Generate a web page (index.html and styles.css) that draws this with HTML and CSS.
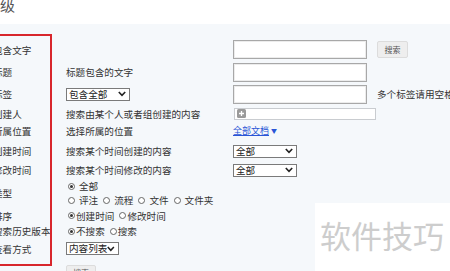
FILE: index.html
```html
<!DOCTYPE html>
<html lang="zh">
<head>
<meta charset="utf-8">
<link rel="stylesheet" href="styles.css">
</head>
<body>
<div class="page">
  <header class="head"><span class="title">级</span></header>
  <div class="form">
    <div class="lbl">包含文字</div>
    <div class="mid"></div>
    <div class="rt"><span class="inp"></span><span class="btn">搜索</span></div>

    <div class="lbl">标题</div>
    <div class="mid">标题包含的文字</div>
    <div class="rt"><span class="inp"></span></div>

    <div class="lbl">标签</div>
    <div class="mid"><span class="sel w64">包含全部<svg class="chev" width="8" height="6" viewBox="0 0 8 6"><polyline points="0.8,1 4,4.4 7.2,1" fill="none" stroke="#222" stroke-width="1.6"/></svg></span></div>
    <div class="rt"><span class="inp"></span><span class="note">多个标签请用空格分隔</span></div>

    <div class="lbl">创建人</div>
    <div class="mid">搜索由某个人或者组创建的内容</div>
    <div class="rt"><span class="pinp"><span class="plus"><svg width="9" height="9" viewBox="0 0 9 9"><rect width="9" height="9" rx="1.5" fill="#9a9a9a"/><path d="M4.5 2v5M2 4.5h5" stroke="#fff" stroke-width="1.3"/></svg></span></span></div>

    <div class="lbl">所属位置</div>
    <div class="mid">选择所属的位置</div>
    <div class="rt"><span class="link"><span class="ul">全部文档</span> <span class="tri">▼</span></span></div>

    <div class="lbl">创建时间</div>
    <div class="mid">搜索某个时间创建的内容</div>
    <div class="rt"><span class="sel w64">全部<svg class="chev" width="8" height="6" viewBox="0 0 8 6"><polyline points="0.8,1 4,4.4 7.2,1" fill="none" stroke="#222" stroke-width="1.6"/></svg></span></div>

    <div class="lbl">修改时间</div>
    <div class="mid">搜索某个时间修改的内容</div>
    <div class="rt"><span class="sel w64">全部<svg class="chev" width="8" height="6" viewBox="0 0 8 6"><polyline points="0.8,1 4,4.4 7.2,1" fill="none" stroke="#222" stroke-width="1.6"/></svg></span></div>

    <div class="lbl">类型</div>
    <div class="mid stack">
      <div class="line"><span class="rad on"></span><span class="rt-txt">全部</span></div>
      <div class="line"><span class="rad"></span><span class="rt-txt">评注</span><span class="rad"></span><span class="rt-txt">流程</span><span class="rad"></span><span class="rt-txt">文件</span><span class="rad"></span><span class="rt-txt">文件夹</span></div>
    </div>
    <div class="rt"></div>

    <div class="lbl">排序</div>
    <div class="mid"><div class="line tight"><span class="rad on"></span><span class="rt-txt">创建时间</span><span class="rad"></span><span class="rt-txt">修改时间</span></div></div>
    <div class="rt"></div>

    <div class="lbl">搜索历史版本</div>
    <div class="mid"><div class="line tight"><span class="rad on"></span><span class="rt-txt">不搜索</span><span class="rad"></span><span class="rt-txt">搜索</span></div></div>
    <div class="rt"></div>

    <div class="lbl">查看方式</div>
    <div class="mid"><span class="sel w53">内容列表<svg class="chev" width="8" height="6" viewBox="0 0 8 6"><polyline points="0.8,1 4,4.4 7.2,1" fill="none" stroke="#222" stroke-width="1.6"/></svg></span></div>
    <div class="rt"></div>

    <div class="lbl"></div>
    <div class="mid top"><span class="btn">搜索</span></div>
    <div class="rt"></div>
  </div>
  <div class="redbox"></div>
  <div class="wm">软件技巧</div>
</div>
</body>
</html>
```

FILE: styles.css
```css
html, body {
  margin: 0;
  padding: 0;
}
body {
  width: 450px;
  height: 271px;
  overflow: hidden;
  background: #f5f8fb;
  font-family: "Noto Sans CJK SC", "Noto Sans", sans-serif;
  font-size: 9.6px;
  color: #333;
}
.page {
  position: relative;
  width: 450px;
  height: 271px;
  overflow: hidden;
}
.head {
  height: 24px;
  background: #fff;
  overflow: hidden;
}
.title {
  display: block;
  font-size: 15px;
  line-height: 15px;
  margin-top: -3px;
  color: #555;
}
.form {
  margin-top: 14px;
  display: grid;
  grid-template-columns: 66px 167px 1fr;
  grid-template-rows: 23px 22px 22px 17px 18px 22px 16px 30px 15px 16px 19px auto;
  align-items: center;
}
.lbl {
  margin-left: -7px;
  white-space: nowrap;
  line-height: 14px;
}
.mid, .rt {
  display: flex;
  align-items: center;
  white-space: nowrap;
  line-height: 14px;
}
.mid.stack {
  flex-direction: column;
  align-items: flex-start;
}
.mid.top {
  align-self: start;
  padding-top: 7px;
}
.inp {
  display: block;
  width: 134px;
  height: 19px;
  box-sizing: border-box;
  background: #fff;
  border: 1px solid #a8a8a8;
  box-shadow: inset 0 0 0 1px #ececec;
}
.btn {
  display: inline-flex;
  align-items: center;
  justify-content: center;
  margin-left: 10px;
  width: 31px;
  height: 17px;
  box-sizing: border-box;
  background: #eeeeee;
  border: 1px solid #dcdcdc;
  border-radius: 2px;
  font-size: 8px;
  color: #555;
}
.mid .btn {
  margin-left: 0;
  width: 30px;
  height: 16px;
}
.note {
  margin-left: 10px;
}
.pinp {
  display: flex;
  align-items: center;
  width: 142px;
  height: 12px;
  box-sizing: border-box;
  background: #fff;
  border: 1px solid #c9ccd0;
  margin-left: 1px;
}
.plus {
  display: flex;
  margin-left: 2px;
}
.link {
  color: #2a55d6;
  font-size: 9px;
}
.ul {
  text-decoration: underline;
}
.tri {
  font-size: 6px;
  vertical-align: 1px;
}
.sel {
  display: flex;
  align-items: center;
  justify-content: space-between;
  height: 13px;
  box-sizing: border-box;
  background: #fff;
  border: 1px solid #7a7a7a;
  padding: 0 3px 0 2px;
  line-height: 11px;
  color: #222;
}
.w64 { width: 64px; }
.w53 { width: 53px; }
.line {
  display: flex;
  align-items: center;
  height: 14px;
}
.rad {
  width: 7px;
  height: 7px;
  box-sizing: border-box;
  border: 1px solid #666;
  border-radius: 50%;
  margin: 0 4px 0 2px;
  background: #fff;
  position: relative;
}
.rad.on::after {
  content: "";
  position: absolute;
  left: 1px;
  top: 1px;
  width: 3px;
  height: 3px;
  border-radius: 50%;
  background: #333;
}
.rt-txt {
  margin-right: 3px;
}
.line.tight .rad {
  margin: 0 1px 0 2px;
}
.line.tight .rt-txt {
  margin-right: 3px;
}
.redbox {
  position: absolute;
  left: -10px;
  top: 34px;
  width: 62px;
  height: 232px;
  box-sizing: border-box;
  border: 2px solid #d8262c;
}
.wm {
  position: absolute;
  left: 315px;
  top: 203px;
  right: 0;
  bottom: 0;
  background: #fff;
  font-size: 31px;
  line-height: 31px;
  padding: 16px 0 0 5px;
  color: #cdcdcd;
  white-space: nowrap;
}
```
